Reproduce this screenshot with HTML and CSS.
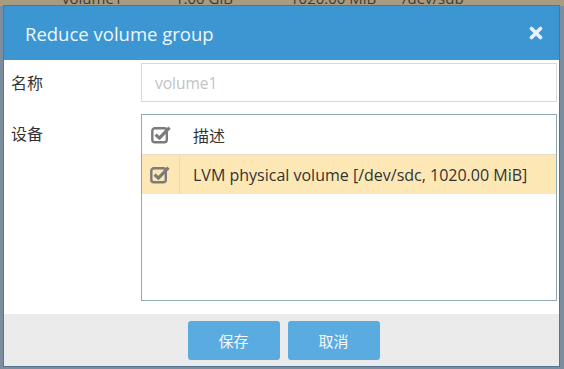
FILE: index.html
```html
<!DOCTYPE html>
<html>
<head>
<meta charset="utf-8">
<link rel="stylesheet" href="styles.css">
</head>
<body>
<div class="page">
  <div class="bg-row">
    <span class="bg-cell c1">volume1</span>
    <span class="bg-cell c2">1.00 GiB</span>
    <span class="bg-cell c3">1020.00 MiB</span>
    <span class="bg-cell c4">/dev/sdb</span>
  </div>
  <div class="dialog">
    <div class="dlg-header">
      <span class="dlg-title">Reduce volume group</span>
      <svg class="dlg-close" width="14" height="14" viewBox="0 0 14 14"><path d="M2.5 2.5 L11.5 11.5 M11.5 2.5 L2.5 11.5" stroke="#e9f2fa" stroke-width="3.6" stroke-linecap="round"/></svg>
    </div>
    <div class="dlg-body">
      <div class="form-row">
        <div class="form-label">名称</div>
        <div class="form-field"><input class="text-input" placeholder="volume1"></div>
      </div>
      <div class="form-row">
        <div class="form-label">设备</div>
        <div class="form-field">
          <div class="dev-table">
            <div class="dev-row head">
              <div class="dev-check"><svg width="21" height="19" viewBox="0 0 21 19"><rect x="1.3" y="3.3" width="14.5" height="14" rx="2.6" fill="none" stroke="#7b7b7b" stroke-width="2.4"/><path d="M4.6 9.6 L8.4 13.2 L18.5 2.6" fill="none" stroke="#7b7b7b" stroke-width="3.2" stroke-linejoin="round"/></svg></div>
              <div class="dev-text">描述</div>
            </div>
            <div class="dev-row sel">
              <div class="dev-check"><svg width="21" height="19" viewBox="0 0 21 19"><rect x="1.3" y="3.3" width="14.5" height="14" rx="2.6" fill="none" stroke="#7b7b7b" stroke-width="2.4"/><path d="M4.6 9.6 L8.4 13.2 L18.5 2.6" fill="none" stroke="#7b7b7b" stroke-width="3.2" stroke-linejoin="round"/></svg></div>
              <div class="dev-text">LVM physical volume [/dev/sdc, 1020.00 MiB]</div>
            </div>
          </div>
        </div>
      </div>
    </div>
    <div class="dlg-footer">
      <button class="btn">保存</button>
      <button class="btn">取消</button>
    </div>
  </div>
</div>
</body>
</html>
```

FILE: styles.css
```css
html, body {
  margin: 0;
  padding: 0;
}
body {
  width: 564px;
  height: 369px;
  overflow: hidden;
  background: #7b8d9e;
  font-family: "Open Sans", "Noto Sans CJK SC", sans-serif;
}
.page {
  position: relative;
  width: 564px;
  height: 369px;
}
.bg-row {
  height: 6px;
  background: #a99b7f;
  position: relative;
  overflow: hidden;
}
.bg-cell {
  position: absolute;
  top: -11px;
  font-size: 15px;
  color: #3d3a33;
  line-height: 18px;
}
.c1 { left: 62px; }
.c2 { left: 175px; }
.c3 { left: 290px; }
.c4 { left: 402px; }
.dialog {
  position: absolute;
  left: 3px;
  top: 5px;
  width: 555px;
  height: 360px;
  border: 1px solid #5d7289;
  background: #fff;
  display: flex;
  flex-direction: column;
}
.dlg-header {
  height: 54px;
  background: #3b96d2;
  display: flex;
  align-items: center;
  justify-content: space-between;
  padding: 0 16px 0 21px;
  flex-shrink: 0;
}
.dlg-title {
  color: #eef6fc;
  font-size: 18.5px;
}
.dlg-close {
  display: block;
}
.dlg-body {
  flex: 1;
  padding: 3px 2px 0 0;
  display: flex;
  flex-direction: column;
  gap: 12px;
}
.form-row {
  display: flex;
}
.form-label {
  width: 137px;
  padding-left: 7px;
  box-sizing: border-box;
  font-size: 16px;
  color: #333;
  padding-top: 7px;
}
.form-field {
  flex: 1;
}
.text-input {
  display: block;
  box-sizing: border-box;
  width: 100%;
  height: 39px;
  border: 1px solid #d9d9d9;
  padding: 0 13px;
  font-family: "Open Sans", sans-serif;
  font-size: 15.5px;
  outline: none;
}
.text-input::placeholder {
  color: #c3c3c3;
}
.dev-table {
  box-sizing: border-box;
  height: 187px;
  border: 1px solid #8eaab4;
}
.dev-row {
  display: flex;
  align-items: stretch;
}
.dev-row.head {
  border-bottom: 1px solid #e4dcc4;
  height: 39px;
}
.dev-row.sel {
  background: #fde8b5;
  height: 39px;
}
.dev-check {
  width: 38px;
  display: flex;
  align-items: center;
  justify-content: center;
  box-sizing: border-box;
}
.dev-check svg { display: block; margin-left: 0; margin-top: -1px; }
.dev-row.sel .dev-check {
  border-right: 1px solid #f1d9a6;
}
.dev-text {
  display: flex;
  align-items: center;
  padding-left: 13px;
  font-size: 16px;
  color: #333;
}
.dlg-footer {
  height: 52px;
  flex-shrink: 0;
  background: #ebebeb;
  border-bottom: 2px solid #e3edf5;
  display: flex;
  justify-content: center;
  align-items: center;
  gap: 8px;
  padding-left: 4px;
  box-sizing: border-box;
}
.btn {
  width: 92px;
  height: 39px;
  border: none;
  border-radius: 3px;
  background: #5aabe0;
  color: #f4f9fd;
  font-family: "Noto Sans CJK SC", sans-serif;
  font-size: 15px;
  padding: 0;
  margin-top: 2px;
}
```
